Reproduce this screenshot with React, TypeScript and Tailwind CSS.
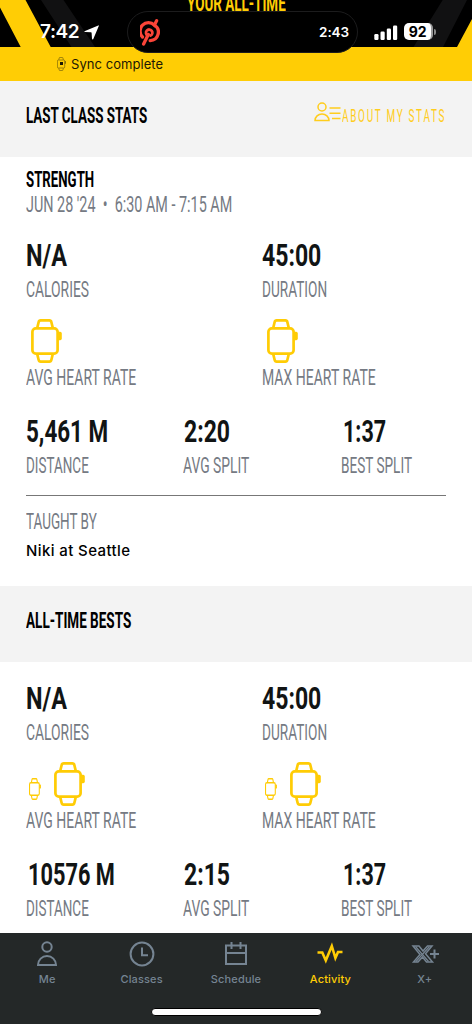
import { useLayoutEffect, useRef, useState } from "react";
import type { ReactNode } from "react";

type CondensedProps = {
  children: string;
  width: number;
  className?: string;
};

// Squeezes a line of text horizontally so it takes up exactly `width` pixels.
function Condensed({ children, width, className = "" }: CondensedProps) {
  const ref = useRef<HTMLSpanElement>(null);
  const [scale, setScale] = useState(1);

  useLayoutEffect(() => {
    if (ref.current) setScale(width / ref.current.offsetWidth);
  }, [width, children]);

  return (
    <span className="block whitespace-pre" style={{ width }}>
      <span
        ref={ref}
        className={`inline-block origin-left align-top font-['Roboto','Liberation_Sans_Narrow',sans-serif] ${className}`}
        style={{ transform: `scaleX(${scale})` }}
      >
        {children}
      </span>
    </span>
  );
}

function Watch({ className, stroke = 2.7 }: { className: string; stroke?: number }) {
  return (
    <svg viewBox="0 0 31 44" preserveAspectRatio="none" className={className} fill="none" stroke="currentColor" strokeWidth={stroke} strokeLinejoin="round">
      <rect x="1.4" y="9.4" width="25.2" height="25.2" rx="3.4" />
      <path d="M6.2 9 7.6 3.2Q8 1.4 9.6 1.4H18.4Q20 1.4 20.4 3.2L21.8 9" />
      <path d="M6.2 35 7.6 40.8Q8 42.6 9.6 42.6H18.4Q20 42.6 20.4 40.8L21.8 35" />
      <path d="M27 12.8h2.2q1.6 0 1.6 1.6v5q0 1.8-1.6 1.8H27z" fill="currentColor" stroke="none" />
    </svg>
  );
}

function Header() {
  return (
    <header className="relative h-[81px] overflow-hidden bg-[#ffcd05]">
      <svg viewBox="0 0 472 47" className="block h-[47px] w-full">
        <path d="M0 7.500 20.700 47H0zM25.500 0H472V19L457 47H50.700z" fill="#000" />
        <path d="M41 0H63.500L95 47H71.500zM442.700 0H467L443 47H413.500z" fill="#111112" />
      </svg>
      <div className="absolute left-[187px] top-[-8px]">
        <Condensed width={99} className="text-[22px] font-bold leading-6 text-[#ffcd05]">YOUR ALL-TIME</Condensed>
      </div>

      <div className="absolute left-[127px] top-[11px] flex h-[42px] w-[231px] items-center justify-between rounded-full border border-[#1c1c1d] bg-black pl-[12px] pr-[8px]">
        <svg viewBox="0 0 20 28" className="h-7 w-5" fill="none" stroke="#fb4438" strokeWidth="3.300" strokeLinecap="round">
          <path d="M2.500 19A8.400 8.400 0 0 1 14.400 7.100L16.600 2.800" />
          <path d="M14.400 7.100A8.400 8.400 0 0 1 10.200 22.600" />
          <path d="M3.600 26 8.300 16.500" />
          <path d="M7.600 17.500A3.200 3.200 0 1 1 10.600 17.600" strokeWidth="2.800" />
        </svg>
        <span className="font-['Inter',sans-serif] text-[13.5px] font-semibold tracking-[-0.1px] text-white">2:43</span>
      </div>

      <div className="absolute left-[40px] top-[22px] flex items-center gap-[5px] text-white">
        <span className="w-[39px] font-['Inter',sans-serif] text-[19px] font-semibold leading-5 tracking-[-0.4px]">7:42</span>
        <svg viewBox="0 0 15 15" className="h-[15px] w-[15px]" fill="currentColor">
          <path d="M14.300.400Q15.200.200 14.800 1.100L9.300 14Q8.500 15.200 8 13.800L7.600 7.700Q7.500 7.200 7 7.200L1 6.900Q-.400 6.500 1 5.900z" />
        </svg>
      </div>

      <div className="absolute left-[374px] top-[23px] flex items-center text-white">
        <svg viewBox="0 0 24 16" className="h-4 w-6" fill="currentColor">
          <rect x=".300" y="10" width="4.200" height="6" rx="1.200" />
          <rect x="6.500" y="7.500" width="4.200" height="8.500" rx="1.200" />
          <rect x="12.800" y="4.500" width="4.200" height="11.500" rx="1.200" />
          <rect x="19" y="1.500" width="4.200" height="14.500" rx="1.200" />
        </svg>
        <span className="ml-[6px] flex h-[17px] w-[29px] items-center justify-center rounded-[5px] border-r-2 border-[#9a9a9a] bg-white font-['Inter',sans-serif] text-[14px] font-bold tracking-[-0.3px] text-black">92</span>
        <span className="ml-[1px] h-[6px] w-[2px] rounded-r bg-[#8a8a8a]" />
      </div>

      <div className="absolute left-[57px] top-[55px] flex items-center text-[#1c1804]">
        <span className="relative flex h-[14px] w-[9px] items-center">
          <Watch className="h-[14px] w-[9px] text-[#86700a]" stroke={2.6} />
          <span className="absolute left-[3px] top-[5px] h-[3px] w-[3px] bg-[#1c1804]" />
        </span>
        <span className="ml-[5px] font-['Inter',sans-serif] text-[13px] leading-[18px] tracking-[0.05px]">Sync complete</span>
      </div>
    </header>
  );
}

function Band({ title, width, children }: { title: string; width: number; children?: ReactNode }) {
  return (
    <div className="flex h-[76px] items-start justify-between bg-[#f3f3f3] pl-[26px] pr-[26px] pt-[22px]">
      <Condensed width={width} className="text-[22px] font-bold leading-[25px] text-black">{title}</Condensed>
      {children}
    </div>
  );
}

type StatProps = {
  value?: ReactNode;
  valueWidth?: number;
  valueClass?: string;
  label: string;
  labelWidth: number;
  className: string;
};

function Stat({ value, valueWidth = 0, valueClass = "", label, labelWidth, className }: StatProps) {
  return (
    <div className={className}>
      {typeof value === "string" ? (
        <div className={`mb-[7px] ${valueClass}`}>
          <Condensed width={valueWidth} className="text-[32px] font-bold leading-8 text-[#111414]">{value}</Condensed>
        </div>
      ) : (
        <div className="mb-[3px] flex h-11 items-center text-[#ffcc05]">{value}</div>
      )}
      <Condensed width={labelWidth} className="text-[22px] leading-6 text-[#757a83]">{label}</Condensed>
    </div>
  );
}

const bigWatch = <Watch className="ml-[5px] h-11 w-[31px]" />;

const watchPair = (
  <>
    <Watch className="ml-[3px] mt-[9px] h-[22px] w-3" stroke={2.8} />
    <Watch className="ml-[13px] h-11 w-[31px]" />
  </>
);

type StatsProps = {
  heart: ReactNode;
  distance: string;
  distanceWidth: number;
  distanceClass?: string;
  avgSplit: string;
};

function Stats({ heart, distance, distanceWidth, distanceClass, avgSplit }: StatsProps) {
  return (
    <>
      <div className="flex">
        <Stat className="w-[236px]" value="N/A" valueWidth={41} label="CALORIES" labelWidth={63} />
        <Stat className="flex-1" value="45:00" valueWidth={59} label="DURATION" labelWidth={65} />
      </div>
      <div className="mt-[17px] flex">
        <Stat className="w-[236px]" value={heart} label="AVG HEART RATE" labelWidth={110} />
        <Stat className="flex-1" value={heart} label="MAX HEART RATE" labelWidth={114} />
      </div>
      <div className="mt-[25px] flex">
        <Stat className="w-[157px]" value={distance} valueWidth={distanceWidth} valueClass={distanceClass} label="DISTANCE" labelWidth={63} />
        <Stat className="w-[158px]" value={avgSplit} valueWidth={46} valueClass="pl-px" label="AVG SPLIT" labelWidth={66} />
        <Stat className="flex-1" value="1:37" valueWidth={43} valueClass="pl-[2px]" label="BEST SPLIT" labelWidth={71} />
      </div>
    </>
  );
}

const tabs = [
  {
    label: "Me",
    icon: (
      <>
        <circle cx="14" cy="7" r="4.700" />
        <path d="M5 25a9 9 0 0 1 18 0z" />
      </>
    ),
  },
  {
    label: "Classes",
    icon: (
      <>
        <circle cx="14" cy="14" r="11.400" />
        <path d="M14 7.500V15.300H20" />
      </>
    ),
  },
  {
    label: "Schedule",
    icon: <path d="M4 5.500H24V24H4zM4 13H24M9.500 2V9M18.500 2V9" />,
  },
  {
    label: "Activity",
    active: true,
    icon: <path d="M1.500 12.500H6.300L9.800 20.500 15.800 6 19.400 18 22 12H26.500" strokeWidth="2.600" />,
  },
  {
    label: "X+",
    icon: (
      <>
        <path d="M2 6H8L12 11 16.500 6H21L14.500 13.700 21.500 22H15.500L11.500 17 7 22H2.500L9 14.500z" strokeWidth="1.500" />
        <path d="M4.500 6.500 17.500 21.500M18.500 6.500 5 21.500" strokeWidth="1.200" />
        <path d="M19 14H28M23.500 9.500V18.500" />
      </>
    ),
  },
];

function TabBar() {
  return (
    <nav className="flex h-[91px] flex-col bg-[#242828]">
      <div className="flex pt-[7px]">
        {tabs.map((tab) => (
          <div key={tab.label} className={`flex flex-1 flex-col items-center ${tab.active ? "text-[#ffcc05]" : "text-[#758492]"}`}>
            <svg viewBox="0 0 28 28" className="h-7 w-7" fill="none" stroke="currentColor" strokeWidth="2">
              {tab.icon}
            </svg>
            <span className="mt-[3px] font-['Inter',sans-serif] text-[11px] font-medium leading-4 tracking-[0.15px]">{tab.label}</span>
          </div>
        ))}
      </div>
      <div className="mx-auto mt-[21px] h-[8px] w-[171px] rounded-full border border-black bg-white" />
    </nav>
  );
}

export default function App() {
  return (
    <div className="flex h-[1024px] w-[472px] flex-col overflow-hidden bg-white">
      <Header />

      <Band title="LAST CLASS STATS" width={121}>
        <div className="flex items-start text-[#ffcd1c]">
          <svg viewBox="0 0 27 20" className="-mt-px mr-[1px] h-5 w-[27px]" fill="none" stroke="currentColor" strokeWidth="1.500">
            <circle cx="8" cy="5" r="4" />
            <path d="M1 18.500a7 6.600 0 0 1 14 0zM15.500 6H26.500M15.500 11.200H26.500M18 16.400H26.500" />
          </svg>
          <Condensed width={104} className="text-[17.500px] leading-[26px] tracking-[3px]">ABOUT MY STATS</Condensed>
        </div>
      </Band>

      <section className="h-[429px] pl-[26px] pt-[11px]">
        <Condensed width={68} className="text-[22px] font-bold leading-6 text-black">STRENGTH</Condensed>
        <Condensed width={206} className="mb-[21px] text-[22px] leading-[26px] text-[#757a83]">{"JUN 28 '24  •  6:30 AM - 7:15 AM"}</Condensed>
        <Stats heart={bigWatch} distance="5,461 M" distanceWidth={82} avgSplit="2:20" />
        <div className="mr-[26px] mt-[17px] border-t border-[#777] pt-[14px]">
          <Condensed width={71} className="text-[22px] leading-6 text-[#757a83]">TAUGHT BY</Condensed>
          <p className="mt-[7px] font-['Inter',sans-serif] text-[15px] font-medium leading-5 tracking-[0.400px] text-black">Niki at Seattle</p>
        </div>
      </section>

      <Band title="ALL-TIME BESTS" width={105} />

      <section className="h-[271px] pl-[26px] pt-[20px]">
        <Stats heart={watchPair} distance="10576 M" distanceWidth={87} distanceClass="pl-[2px]" avgSplit="2:15" />
      </section>

      <TabBar />
    </div>
  );
}
